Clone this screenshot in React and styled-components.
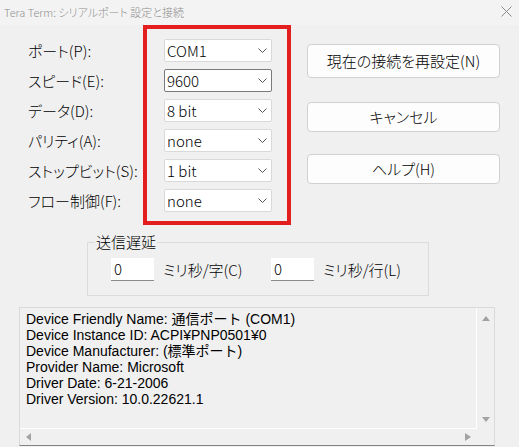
import React from 'react';
import styled, { createGlobalStyle } from 'styled-components';

const GlobalStyle = createGlobalStyle`
  html, body {
    margin: 0;
    padding: 0;
    background: #f0f0f0;
    overflow: hidden;
  }
`;

const UI_FONT = `"Noto Sans CJK JP", "Noto Sans", sans-serif`;

const Window = styled.div`
  width: 519px;
  height: 447px;
  background: #f0f0f0;
  display: flex;
  flex-direction: column;
  font-family: ${UI_FONT};
  font-weight: 300;
  font-feature-settings: "palt";
  color: #000;
`;

const TitleBar = styled.div`
  height: 25px;
  flex: none;
  background: #f3f3f3;
  display: flex;
  align-items: center;
  justify-content: space-between;
  padding: 0 7px 2px 4px;
  box-sizing: border-box;
`;

const Title = styled.span`
  font-size: 11px;
  line-height: 14px;
  color: #8f8f8f;
`;

const TopRow = styled.div`
  display: flex;
  align-items: flex-start;
`;

const LabelColumn = styled.div`
  width: 143px;
  box-sizing: border-box;
  padding: 14px 0 0 28px;
  display: flex;
  flex-direction: column;
  gap: 7px;
`;

const Label = styled.div`
  height: 23px;
  display: flex;
  align-items: center;
  font-size: 15px;
  line-height: 23px;
  white-space: nowrap;
`;

const Highlight = styled.div`
  width: 148px;
  box-sizing: border-box;
  border: 4px solid #e41e1e;
  padding: 10px 15px 9px 17px;
  display: flex;
  flex-direction: column;
  gap: 7px;
`;

const Select = styled.div`
  width: 108px;
  height: 23px;
  box-sizing: border-box;
  background: #fff;
  border: 1px solid ${p => (p.focused ? '#7a7a7a' : '#d9d9d9')};
  border-radius: 2px;
  display: flex;
  align-items: center;
  justify-content: space-between;
  padding: 0 4px 0 2px;
  font-size: 15px;
  line-height: 21px;
`;

const ButtonColumn = styled.div`
  width: 193px;
  margin-left: 16px;
  padding-top: 19px;
  display: flex;
  flex-direction: column;
`;

const Button = styled.div`
  height: ${p => p.h}px;
  margin-top: ${p => p.gap || 0}px;
  box-sizing: border-box;
  background: #fdfdfd;
  border: 1px solid #d0d0d0;
  border-radius: 4px;
  display: flex;
  align-items: center;
  justify-content: center;
  font-size: 15px;
  line-height: 18px;
`;

const GroupBox = styled.div`
  position: relative;
  width: 342px;
  height: 54px;
  box-sizing: border-box;
  margin: 17px 0 0 87px;
  border: 1px solid #dcdcdc;
  padding: 15px 0 0 23px;
  display: flex;
  align-items: flex-start;
`;

const Legend = styled.span`
  position: absolute;
  top: -9px;
  left: 7px;
  padding: 0 1px;
  background: #f0f0f0;
  font-size: 15px;
  line-height: 16px;
`;

const NumberBox = styled.div`
  width: 43px;
  height: 23px;
  box-sizing: border-box;
  background: #fff;
  border-bottom: 1px solid #8c8c8c;
  padding-left: 3px;
  font-size: 15px;
  line-height: 22px;
`;

const Unit = styled.span`
  width: ${p => (p.w ? `${p.w}px` : 'auto')};
  margin-left: 9px;
  font-size: 15px;
  line-height: 23px;
  white-space: nowrap;
`;

const InfoBox = styled.div`
  width: 476px;
  height: 139px;
  box-sizing: border-box;
  margin: 11px 0 0 19px;
  border: 1px solid #dadada;
  border-bottom-color: #838383;
  display: grid;
  grid-template-columns: 1fr 17px;
  grid-template-rows: 1fr 16px;
`;

const InfoText = styled.div`
  border-right: 1px solid #fff;
  border-bottom: 1px solid #fff;
  padding: 3px 0 0 6px;
  font-family: "Liberation Sans", "Noto Sans CJK JP", sans-serif;
  font-weight: 400;
  font-feature-settings: normal;
  font-size: 14px;
  line-height: 16px;
  color: #000;
`;

const VScroll = styled.div`
  display: flex;
  flex-direction: column;
  align-items: center;
  justify-content: space-between;
  padding: 7px 0 6px;
`;

const HScroll = styled.div`
  display: flex;
  align-items: center;
  justify-content: space-between;
  padding: 0 5px;
`;

const Chevron = () => (
  <svg width="9" height="5" viewBox="0 0 9 5">
    <path d="M0.5 0.5 L4.5 4.5 L8.5 0.5" fill="none" stroke="#555" strokeWidth="1" />
  </svg>
);

const CloseIcon = () => (
  <svg width="11" height="11" viewBox="0 0 11 11">
    <path d="M0.5 0.5 L10.5 10.5 M10.5 0.5 L0.5 10.5" stroke="#8a8a8a" strokeWidth="1" />
  </svg>
);

const Arrow = ({ dir }) => {
  const shapes = {
    up: 'M0 6 L4 1 L8 6 Z',
    down: 'M0 0 L8 0 L4 5 Z',
    left: 'M6 0 L6 8 L1 4 Z',
    right: 'M0 0 L6 4 L0 8 Z',
  };
  const vertical = dir === 'up' || dir === 'down';
  return (
    <svg width={vertical ? 8 : 7} height={vertical ? 6 : 8} viewBox={vertical ? '0 0 8 6' : '0 0 7 8'}>
      <path d={shapes[dir]} fill="#a3a3a3" />
    </svg>
  );
};

const fields = [
  { label: 'ポート(P):', value: 'COM1' },
  { label: 'スピード(E):', value: '9600', focused: true },
  { label: 'データ(D):', value: '8 bit' },
  { label: 'パリティ(A):', value: 'none' },
  { label: 'ストップビット(S):', value: '1 bit' },
  { label: 'フロー制御(F):', value: 'none' },
];

const info = [
  'Device Friendly Name: 通信ポート (COM1)',
  'Device Instance ID: ACPI¥PNP0501¥0',
  'Device Manufacturer: (標準ポート)',
  'Provider Name: Microsoft',
  'Driver Date: 6-21-2006',
  'Driver Version: 10.0.22621.1',
];

export default function App() {
  return (
    <>
      <GlobalStyle />
      <Window>
        <TitleBar>
          <Title>Tera Term: シリアルポート 設定と接続</Title>
          <CloseIcon />
        </TitleBar>

        <TopRow>
          <LabelColumn>
            {fields.map(f => (
              <Label key={f.label}>{f.label}</Label>
            ))}
          </LabelColumn>

          <Highlight>
            {fields.map(f => (
              <Select key={f.label} focused={f.focused}>
                <span>{f.value}</span>
                <Chevron />
              </Select>
            ))}
          </Highlight>

          <ButtonColumn>
            <Button h={34}>現在の接続を再設定(N)</Button>
            <Button h={30} gap={24}>キャンセル</Button>
            <Button h={30} gap={22}>ヘルプ(H)</Button>
          </ButtonColumn>
        </TopRow>

        {/* 送信遅延 */}
        <GroupBox>
          <Legend>送信遅延</Legend>
          <NumberBox>0</NumberBox>
          <Unit w={108}>ミリ秒/字(C)</Unit>
          <NumberBox>0</NumberBox>
          <Unit>ミリ秒/行(L)</Unit>
        </GroupBox>

        <InfoBox>
          <InfoText>
            {info.map(line => (
              <div key={line}>{line}</div>
            ))}
          </InfoText>
          <VScroll>
            <Arrow dir="up" />
            <Arrow dir="down" />
          </VScroll>
          <HScroll>
            <Arrow dir="left" />
            <Arrow dir="right" />
          </HScroll>
          <div />
        </InfoBox>
      </Window>
    </>
  );
}
